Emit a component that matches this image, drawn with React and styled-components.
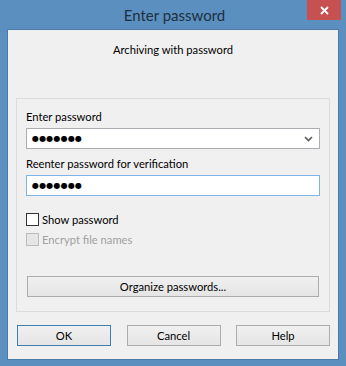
import React from "react";
import styled, { createGlobalStyle } from "styled-components";

const Global = createGlobalStyle`
  html, body {
    margin: 0;
    padding: 0;
    background: #5a8fbf;
  }
  * {
    box-sizing: border-box;
  }
`;

const Window = styled.div`
  width: 346px;
  height: 366px;
  background: #5a8fbf;
  padding: 0 8px 7px;
  display: flex;
  flex-direction: column;
  font-family: "Segoe UI", Lato, "Noto Sans", sans-serif;
  font-size: 11.2px;
  color: #000;
`;

const TitleBar = styled.div`
  height: 31px;
  display: grid;
  grid-template-columns: 1fr auto 1fr;
  align-items: start;
  margin-right: -3px;
`;

const Title = styled.div`
  grid-column: 2;
  font-size: 15px;
  line-height: 30px;
  color: #1e2f40;
`;

const CloseButton = styled.div`
  grid-column: 3;
  justify-self: end;
  width: 34px;
  height: 20px;
  background: #c75050;
  display: flex;
  align-items: center;
  justify-content: center;
`;

const Client = styled.div`
  flex: 1;
  background: #f0f0f0;
  box-shadow: 0 0 0 1px #4c7ba6;
  padding: 12px 8px 13px;
  display: flex;
  flex-direction: column;
`;

const Caption = styled.div`
  text-align: center;
  line-height: 16px;
  height: 16px;
`;

const Group = styled.div`
  margin-top: 40px;
  height: 214px;
  border: 1px solid #dcdcdc;
  padding: 10px 9px 0;
  display: flex;
  flex-direction: column;
`;

const Label = styled.div`
  line-height: 16px;
  margin-top: ${(p) => p.$top || 0}px;
`;

const Field = styled.div`
  margin-top: 3px;
  height: 21px;
  background: #fff;
  border: 1px solid ${(p) => (p.$focused ? "#7eb4ea" : "#abadb3")};
  display: flex;
  align-items: center;
  padding: 0 6px 0 5px;
`;

const Dots = styled.span`
  flex: 1;
  font-family: "DejaVu Sans", sans-serif;
  font-size: 8px;
  letter-spacing: 0.2px;
  line-height: 1;
  color: #000;
`;

const CheckRow = styled.label`
  display: flex;
  align-items: center;
  height: 16px;
  margin-top: ${(p) => p.$top}px;
  color: ${(p) => (p.$disabled ? "#a0a0a0" : "#000")};
`;

const Box = styled.span`
  width: 13px;
  height: 13px;
  margin-right: 3px;
  border: 1px solid ${(p) => (p.$disabled ? "#bcbcbc" : "#333")};
  background: ${(p) => (p.$disabled ? "#e6e6e6" : "#fff")};
`;

const Button = styled.div`
  height: 21px;
  width: ${(p) => (p.$wide ? "auto" : "94px")};
  margin: ${(p) => (p.$wide ? "29px 1px 0" : "0")};
  border: 1px solid ${(p) => (p.$focused ? "#3c7fb1" : "#acacac")};
  background: linear-gradient(#f0f0f0, #e5e5e5);
  display: flex;
  align-items: center;
  justify-content: center;
  line-height: 16px;
`;

const ButtonRow = styled.div`
  margin-top: 13px;
  padding: 0 0 0 1px;
  display: flex;
  justify-content: space-between;
`;

const Chevron = () => (
  <svg width="9" height="6" viewBox="0 0 9 6">
    <polyline points="1,1 4.5,4.5 8,1" fill="none" stroke="#5a5a5a" strokeWidth="1.6" />
  </svg>
);

export default function App() {
  return (
    <>
      <Global />
      <Window>
        <TitleBar>
          <Title>Enter password</Title>
          <CloseButton>
            <svg width="9" height="9" viewBox="0 0 9 9">
              <path d="M1 1L8 8M8 1L1 8" stroke="#fff" strokeWidth="1.8" />
            </svg>
          </CloseButton>
        </TitleBar>
        <Client>
          <Caption>Archiving with password</Caption>
          <Group>
            <Label>Enter password</Label>
            <Field>
              <Dots>●●●●●●●</Dots>
              <Chevron />
            </Field>
            <Label $top={7}>Reenter password for verification</Label>
            <Field $focused>
              <Dots>●●●●●●●</Dots>
            </Field>
            <CheckRow $top={15}>
              <Box />
              Show password
            </CheckRow>
            <CheckRow $top={4} $disabled>
              <Box $disabled />
              Encrypt file names
            </CheckRow>
            <Button $wide>Organize passwords...</Button>
          </Group>
          <ButtonRow>
            <Button $focused>OK</Button>
            <Button>Cancel</Button>
            <Button>Help</Button>
          </ButtonRow>
        </Client>
      </Window>
    </>
  );
}
